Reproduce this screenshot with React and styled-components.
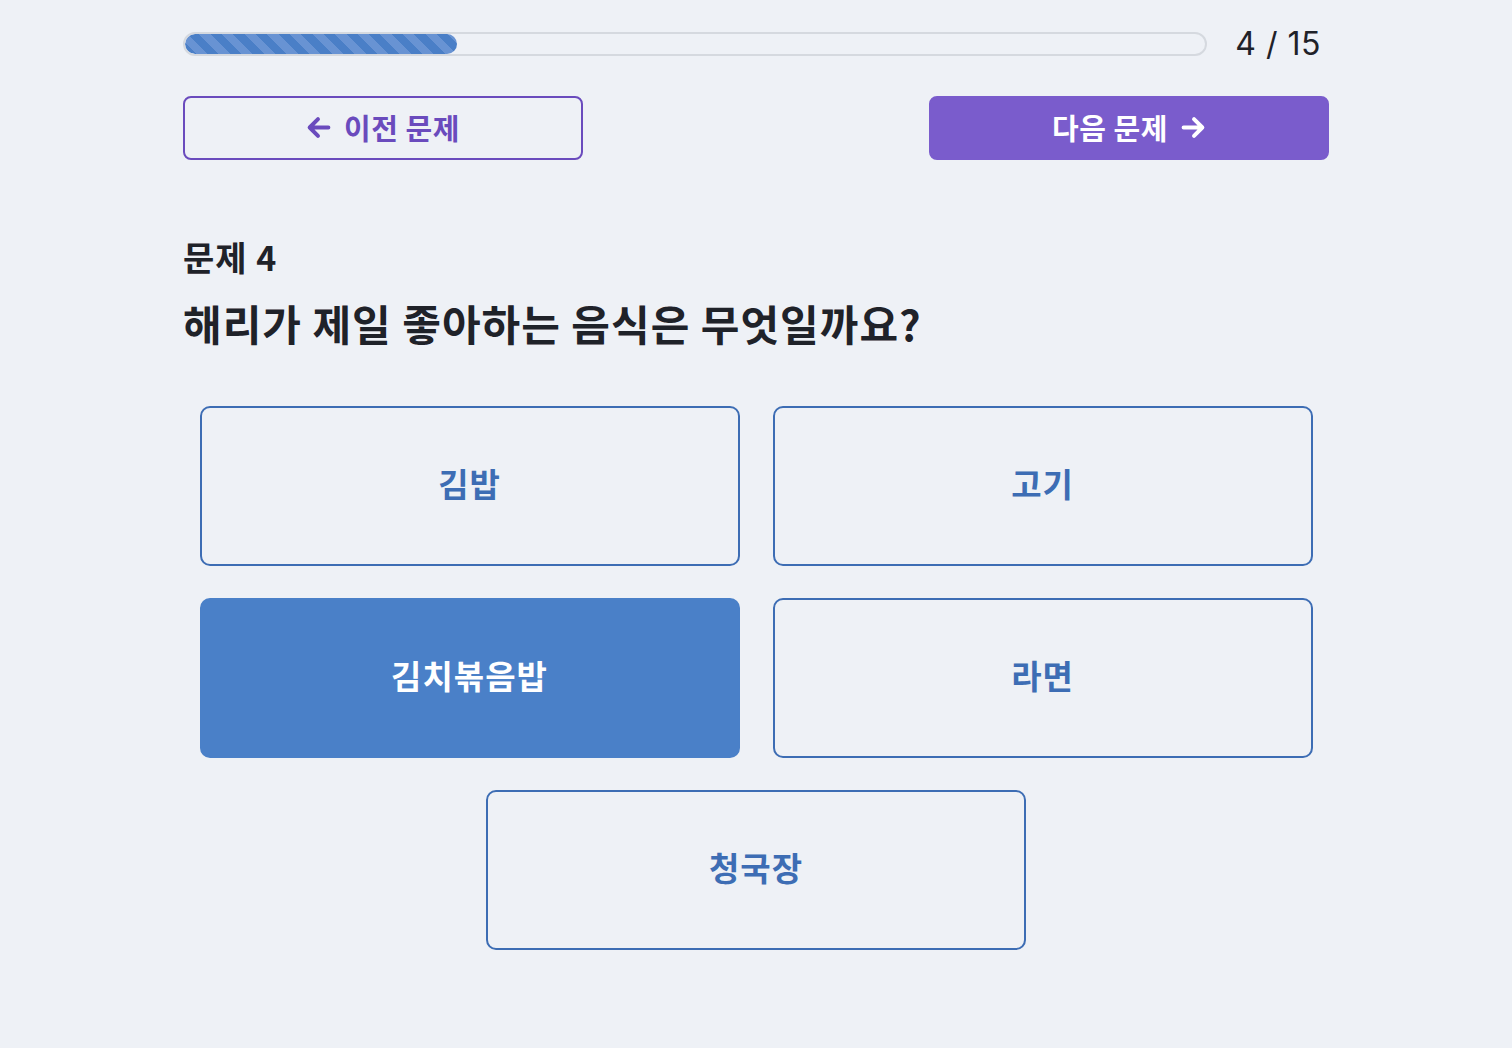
import React from 'react';
import styled, { createGlobalStyle } from 'styled-components';

const GlobalStyle = createGlobalStyle`
  html, body {
    margin: 0;
    padding: 0;
    background: #eef1f6;
  }
  body {
    font-family: "Inter", "Noto Sans CJK KR", sans-serif;
  }
`;

const Page = styled.div`
  width: 1146px;
  margin: 0 auto;
  padding-top: 32px;
  display: flex;
  flex-direction: column;
`;

const ProgressRow = styled.div`
  display: flex;
  align-items: center;
  gap: 28px;
  height: 24px;
`;

const Track = styled.div`
  flex: 1;
  height: 24px;
  box-sizing: border-box;
  border: 2px solid #d5d9df;
  border-radius: 12px;
  background: #eef1f6;
  overflow: hidden;
`;

const Fill = styled.div`
  height: 100%;
  border-radius: 10px;
  background-color: #4a7fc7;
  background-image: repeating-linear-gradient(
    45deg,
    #4a7fc7 0px,
    #4a7fc7 8px,
    #6893d3 8px,
    #6893d3 16px
  );
`;

const Count = styled.div`
  font-family: "Inter", sans-serif;
  font-size: 32px;
  color: #1f2229;
  letter-spacing: 0.5px;
  padding-right: 8px;
  line-height: 1;
`;

const NavRow = styled.div`
  display: flex;
  justify-content: space-between;
  margin-top: 40px;
`;

const NavButton = styled.button`
  width: 400px;
  height: 64px;
  box-sizing: border-box;
  border-radius: 8px;
  border: 2px solid ${p => (p.$primary ? '#7a5ccc' : '#6a4bbd')};
  background: ${p => (p.$primary ? '#7a5ccc' : 'transparent')};
  color: ${p => (p.$primary ? '#ffffff' : '#6a4bbd')};
  font-family: "Noto Sans CJK KR", sans-serif;
  font-size: 29px;
  font-weight: 700;
  letter-spacing: 0.5px;
  display: flex;
  align-items: center;
  justify-content: center;
  gap: 13px;
  cursor: pointer;
  padding: 0 0 2px;
`;

const Arrow = styled.svg`
  width: 25px;
  height: 23px;
  flex: none;
`;

const ArrowIcon = ({ dir }) => (
  <Arrow viewBox="0 0 24 22" fill="none" stroke="currentColor" strokeWidth="3.8" strokeLinecap="round" strokeLinejoin="round">
    {dir === 'left' ? (
      <path d="M21.5 11H3.5M11.5 3L3.5 11L11.5 19" />
    ) : (
      <path d="M2.5 11H20.5M12.5 3L20.5 11L12.5 19" />
    )}
  </Arrow>
);

const Label = styled.div`
  margin-top: 76px;
  font-family: "Noto Sans CJK KR", sans-serif;
  font-size: 34px;
  font-weight: 700;
  letter-spacing: 1px;
  color: #1f2229;
  line-height: 42px;
`;

const Question = styled.h1`
  margin: 20px 0 0;
  font-family: "Noto Sans CJK KR", sans-serif;
  font-size: 42px;
  font-weight: 700;
  color: #1f2229;
  line-height: 50px;
  letter-spacing: 1px;
`;

const Options = styled.div`
  margin: 58px auto 0;
  width: 1113px;
  display: grid;
  grid-template-columns: repeat(2, 540px);
  column-gap: 33px;
  row-gap: 32px;
`;

const Option = styled.button`
  height: 160px;
  box-sizing: border-box;
  border-radius: 10px;
  border: 2px solid ${p => (p.$selected ? '#4a80c8' : '#3d6db4')};
  background: ${p => (p.$selected ? '#4a80c8' : 'transparent')};
  color: ${p => (p.$selected ? '#ffffff' : '#3d6db4')};
  font-family: "Noto Sans CJK KR", sans-serif;
  font-size: 33px;
  font-weight: 700;
  letter-spacing: 1px;
  cursor: pointer;
  padding: 0 0 6px;
  ${p => (p.$center ? 'grid-column: 1 / span 2; width: 540px; justify-self: center;' : '')}
`;

const options = ['김밥', '고기', '김치볶음밥', '라면', '청국장'];

const App = () => {
  const current = 4;
  const total = 15;
  const selected = 2;

  return (
    <>
      <GlobalStyle />
      <Page>
        <ProgressRow>
          <Track>
            <Fill style={{ width: `${(current / total) * 100}%` }} />
          </Track>
          <Count>{current} / {total}</Count>
        </ProgressRow>
        <NavRow>
          <NavButton>
            <ArrowIcon dir="left" />
            이전 문제
          </NavButton>
          <NavButton $primary>
            다음 문제
            <ArrowIcon dir="right" />
          </NavButton>
        </NavRow>
        <Label>문제 {current}</Label>
        <Question>해리가 제일 좋아하는 음식은 무엇일까요?</Question>
        <Options>
          {options.map((o, i) => (
            <Option
              key={o}
              $selected={i === selected}
              $center={i === options.length - 1 && options.length % 2 === 1}
            >
              {o}
            </Option>
          ))}
        </Options>
      </Page>
    </>
  );
};

export default App;
